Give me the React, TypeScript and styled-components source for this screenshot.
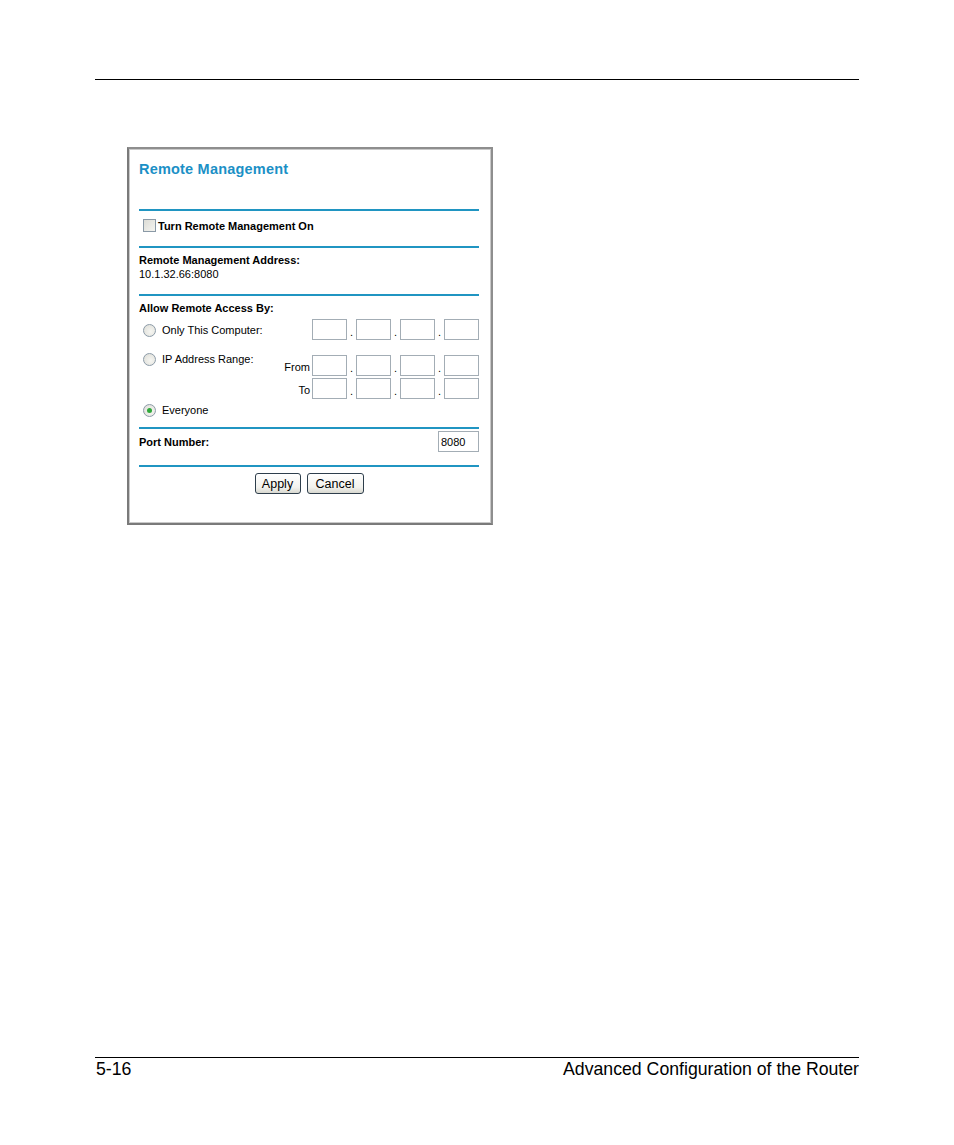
import React from "react";
import styled, { createGlobalStyle } from "styled-components";

const GlobalStyle = createGlobalStyle`
  html, body {
    margin: 0;
    padding: 0;
    background: #ffffff;
  }
  body {
    font-family: "Liberation Sans", Arial, sans-serif;
    color: #000;
  }
`;

const Page = styled.div`
  width: 954px;
  height: 1145px;
  display: flex;
  flex-direction: column;
  box-sizing: border-box;
  padding: 79px 95px 0 95px;
`;

const PageRule = styled.div`
  height: 1px;
  background: #000;
`;

const Footer = styled.footer`
  margin-top: auto;
  padding-bottom: 65px;
`;

const FooterRow = styled.div`
  display: flex;
  justify-content: space-between;
  font-size: 17.7px;
  line-height: 21px;
  padding-top: 1px;
  padding-left: 1px;
`;

const Panel = styled.div`
  margin: 67px 0 0 32px;
  width: 366px;
  height: 378px;
  box-sizing: border-box;
  border: 2px solid #8e8e8e;
  border-left-color: #7a7a7a;
  border-bottom-color: #7a7a7a;
  box-shadow: inset 0 0 0 1px #c9c9c9;
  padding: 0 12px 0 10px;
  font-size: 11px;
  line-height: 14px;
`;

const Title = styled.h1`
  margin: 0;
  padding-top: 11px;
  height: 60px;
  box-sizing: border-box;
  font-size: 14.5px;
  line-height: 18px;
  font-weight: bold;
  color: #1b90c6;
  letter-spacing: 0.2px;
`;

const Rule = styled.div`
  height: 2px;
  background: #2095c2;
`;

const CheckRow = styled.label`
  display: flex;
  align-items: center;
  gap: 2px;
  height: 35px;
  padding: 0 0 6px 4px;
  box-sizing: border-box;
  font-weight: bold;
`;

const Box = styled.span`
  width: 11px;
  height: 11px;
  border: 1px solid #8a99a6;
  background: linear-gradient(135deg, #dcdcd6 0%, #f4f4f0 100%);
`;

const Block = styled.div<{ $top: number; $bottom: number }>`
  padding-top: ${(p) => p.$top}px;
  padding-bottom: ${(p) => p.$bottom}px;
`;

const Label = styled.div`
  font-weight: bold;
`;

const Row = styled.div<{ $top?: number }>`
  display: flex;
  align-items: center;
  justify-content: space-between;
  margin-top: ${(p) => p.$top ?? 0}px;
`;

const Choice = styled.span<{ $top?: boolean }>`
  display: flex;
  align-items: center;
  gap: 6px;
  padding-left: 4px;
  padding-top: 1px;
  align-self: ${(p) => (p.$top ? "flex-start" : "center")};
`;

const Radio = styled.span<{ $on?: boolean }>`
  position: relative;
  width: 11px;
  height: 11px;
  border-radius: 50%;
  border: 1px solid #8c9ba8;
  background: radial-gradient(circle at 60% 60%, #f6f6f2 0%, #dcdcd6 100%);
  &::after {
    content: "";
    display: ${(p) => (p.$on ? "block" : "none")};
    position: absolute;
    left: 3px;
    top: 3px;
    width: 5px;
    height: 5px;
    border-radius: 50%;
    background: #2fa83a;
  }
`;

const IpGroup = styled.div`
  display: flex;
  align-items: center;
`;

const Field = styled.span<{ $w: number }>`
  display: flex;
  align-items: center;
  width: ${(p) => p.$w}px;
  height: 21px;
  box-sizing: border-box;
  border: 1px solid #a3adb5;
  background: #fff;
  padding-left: 2px;
  font-size: 11px;
`;

const Dot = styled.span`
  width: 9px;
  text-align: center;
  align-self: flex-end;
  line-height: 14px;
  padding-bottom: 1px;
`;

const RangeCol = styled.div`
  display: flex;
  flex-direction: column;
  gap: 2px;
  padding-top: 4px;
`;

const RangeLabel = styled.span`
  width: 40px;
  text-align: right;
  padding-right: 2px;
  font-size: 11px;
  padding-top: 2px;
`;

const Buttons = styled.div`
  display: flex;
  justify-content: center;
  gap: 6px;
  padding-top: 6px;
`;

const Button = styled.button<{ $w: number }>`
  width: ${(p) => p.$w}px;
  height: 21px;
  box-sizing: border-box;
  border: 1px solid #2e3e4c;
  border-radius: 3px;
  background: linear-gradient(#ffffff 0%, #f2f2ee 70%, #d8d8d0 100%);
  font-family: "Liberation Sans", Arial, sans-serif;
  font-size: 12.5px;
  padding: 0;
  color: #000;
`;

const Ip = () => (
  <IpGroup>
    <Field $w={35} />
    <Dot>.</Dot>
    <Field $w={35} />
    <Dot>.</Dot>
    <Field $w={35} />
    <Dot>.</Dot>
    <Field $w={35} />
  </IpGroup>
);

export default function App() {
  return (
    <>
      <GlobalStyle />
      <Page>
        <PageRule />
        <Panel>
          <Title>Remote Management</Title>
          <Rule />
          <CheckRow>
            <Box />
            Turn Remote Management On
          </CheckRow>
          <Rule />
          <Block $top={5} $bottom={13}>
            <Label>Remote Management Address:</Label>
            <div>10.1.32.66:8080</div>
          </Block>
          <Rule />
          <Block $top={5} $bottom={10}>
            <Label>Allow Remote Access By:</Label>
            <Row $top={4}>
              <Choice>
                <Radio />
                Only This Computer:
              </Choice>
              <Ip />
            </Row>
            <Row $top={11}>
              <Choice $top>
                <Radio />
                IP Address Range:
              </Choice>
              <RangeCol>
                <Row>
                  <RangeLabel>From</RangeLabel>
                  <Ip />
                </Row>
                <Row>
                  <RangeLabel>To</RangeLabel>
                  <Ip />
                </Row>
              </RangeCol>
            </Row>
            <Row $top={3}>
              <Choice>
                <Radio $on />
                Everyone
              </Choice>
            </Row>
          </Block>
          <Rule />
          <Block $top={2} $bottom={13}>
            <Row>
              <Label>Port Number:</Label>
              <Field $w={41}>8080</Field>
            </Row>
          </Block>
          <Rule />
          <Buttons>
            <Button $w={46}>Apply</Button>
            <Button $w={57}>Cancel</Button>
          </Buttons>
        </Panel>
        <Footer>
          <PageRule />
          <FooterRow>
            <span>5-16</span>
            <span>Advanced Configuration of the Router</span>
          </FooterRow>
        </Footer>
      </Page>
    </>
  );
}
